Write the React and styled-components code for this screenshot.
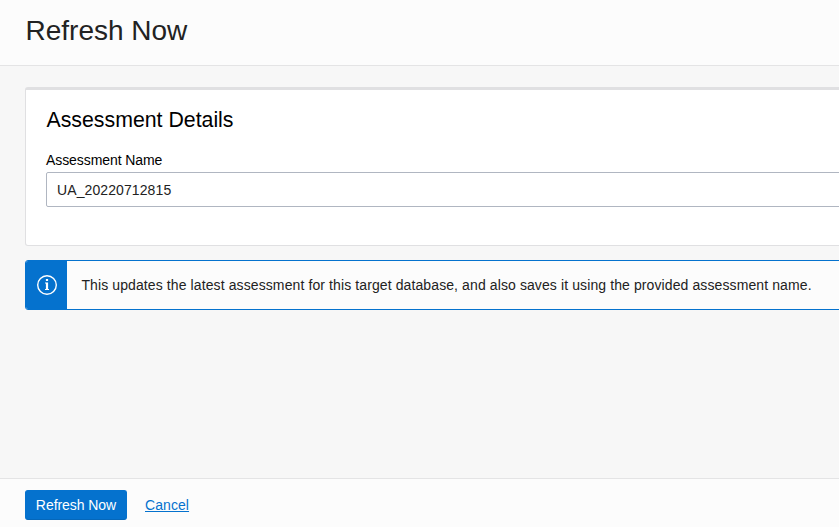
import React from "react";
import styled, { createGlobalStyle } from "styled-components";

const GlobalStyle = createGlobalStyle`
  * { box-sizing: border-box; }
  body {
    margin: 0;
    overflow: hidden;
    background: #f7f7f7;
    font-family: "Liberation Sans", Arial, sans-serif;
    font-size: 14px;
    color: #222;
  }
`;

const Page = styled.div`
  display: flex;
  flex-direction: column;
  height: 527px;
  overflow: hidden;
`;

const Header = styled.header`
  height: 66px;
  flex: none;
  padding: 15px 25px 0 25.5px;
  background: #fcfcfc;
  border-bottom: 1px solid #e4e4e5;
`;

const Title = styled.h1`
  margin: 0;
  font-size: 28px;
  line-height: 32px;
  font-weight: 400;
`;

const Content = styled.main`
  flex: 1;
  display: flex;
  flex-direction: column;
  gap: 14px;
  padding: 21px 0 0 25px;
  margin-right: -24px;
`;

const Panel = styled.section`
  height: 159px;
  padding: 18px 20px 0;
  background: #fff;
  border: 1px solid #e0e0e2;
  border-top-width: 3px;
  border-radius: 3px;
`;

const PanelTitle = styled.h2`
  margin: 0 0 18px;
  padding-left: 0.5px;
  font-size: 21.3px;
  line-height: 24px;
  font-weight: 400;
  color: #000;
`;

const Label = styled.label`
  display: block;
  margin-bottom: 2px;
  line-height: 20px;
  letter-spacing: -0.08px;
  color: #000;
`;

const TextInput = styled.input`
  display: block;
  width: 100%;
  height: 35px;
  padding: 0 10px;
  border: 1px solid #b0b6c1;
  border-radius: 2px;
  background: #fff;
  color: #222;
  font: inherit;
  letter-spacing: 0.1px;
  outline: none;
`;

const Notice = styled.div`
  display: flex;
  height: 50px;
  border: 1px solid #0572ce;
  border-radius: 3px;
  background: #fcfcfc;
  overflow: hidden;
`;

const NoticeIcon = styled.div`
  display: flex;
  align-items: center;
  justify-content: center;
  width: 41px;
  flex: none;
  background: #0572ce;
  svg { display: block; margin-left: 1px; }
`;

const NoticeText = styled.p`
  margin: 0;
  padding-left: 14.4px;
  line-height: 48px;
  letter-spacing: 0.105px;
  white-space: nowrap;
`;

const Footer = styled.footer`
  display: flex;
  align-items: flex-start;
  gap: 18px;
  height: 49px;
  flex: none;
  padding: 11px 25px 0;
  background: #fcfcfc;
  border-top: 1px solid #e4e4e5;
`;

const PrimaryButton = styled.button`
  width: 102px;
  height: 30px;
  padding: 0;
  border: 1px solid #0572ce;
  border-bottom-color: #0567ba;
  border-radius: 3px;
  background: #0572ce;
  color: #fff;
  font: inherit;
  letter-spacing: -0.06px;
`;

const CancelLink = styled.a`
  line-height: 30px;
  letter-spacing: 0.08px;
  color: #0572ce;
  text-decoration: underline;
`;

function InfoIcon() {
  return (
    <svg width="22" height="22" viewBox="0 0 22 22" fill="none">
      <circle cx="11" cy="11" r="9.3" stroke="#fff" strokeWidth="1.4" />
      <path d="M9.9 5h2.2v2H9.9zM9 8.6h3.1v6.4H13v1H9v-1h.9V9.6H9z" fill="#fff" />
    </svg>
  );
}

export default function App() {
  return (
    <Page>
      <GlobalStyle />
      <Header>
        <Title>Refresh Now</Title>
      </Header>
      <Content>
        <Panel>
          <PanelTitle>Assessment Details</PanelTitle>
          <Label htmlFor="assessment-name">Assessment Name</Label>
          <TextInput id="assessment-name" defaultValue="UA_20220712815" />
        </Panel>
        <Notice>
          <NoticeIcon>
            <InfoIcon />
          </NoticeIcon>
          <NoticeText>
            This updates the latest assessment for this target database, and also saves it using the provided assessment name.
          </NoticeText>
        </Notice>
      </Content>
      <Footer>
        <PrimaryButton>Refresh Now</PrimaryButton>
        <CancelLink href="#">Cancel</CancelLink>
      </Footer>
    </Page>
  );
}
